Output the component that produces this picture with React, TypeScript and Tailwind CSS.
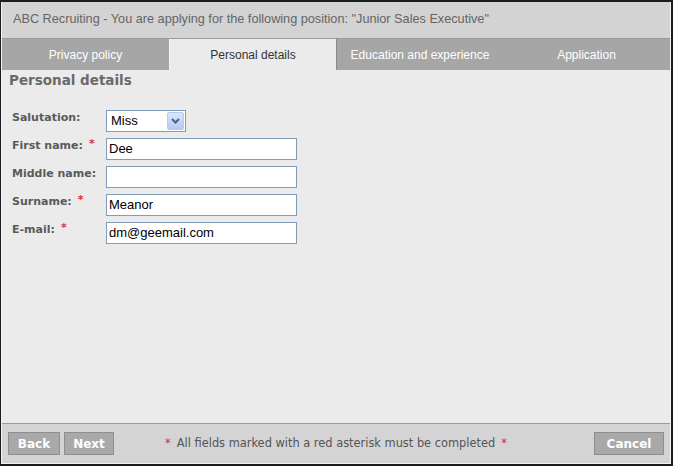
import React from "react";

const verdana = { fontFamily: '"DejaVu Sans", Verdana, sans-serif' };
const arial = { fontFamily: '"Liberation Sans", Arial, sans-serif' };

function Field({ value, width = "w-[191px]" }: { value: string; width?: string }) {
  return (
    <div
      className={`${width} h-[22px] bg-white border border-[#7f9db9] px-[2px] flex items-center text-[13px] text-black`}
      style={arial}
    >
      {value}
    </div>
  );
}

function Row({ label, required, children }: { label: string; required?: boolean; children: React.ReactNode }) {
  return (
    <div className="flex items-start h-[28px]">
      <div
        className="w-[94px] text-[11px] leading-[14px] font-bold text-[#5a5a5a] mt-[1px]"
        style={verdana}
      >
        {label}
        {required && <span className="text-[#e0302a] ml-[6px] relative -top-[2px]">*</span>}
      </div>
      {children}
    </div>
  );
}

function Select() {
  return (
    <div className="w-[80px] h-[22px] bg-white border border-[#7f9db9] flex items-center pl-[4px] pr-[1px] text-[13px] text-black" style={arial}>
      <span className="flex-1">Miss</span>
      <div className="w-[17px] h-[18px] rounded-[2px] border border-[#b8c9ef] bg-gradient-to-b from-[#dce6fb] to-[#b5c9f3] flex items-center justify-center">
        <svg width="9" height="6" viewBox="0 0 9 6">
          <path d="M1 1 L4.5 4.5 L8 1" stroke="#4d6185" strokeWidth="2" fill="none" />
        </svg>
      </div>
    </div>
  );
}

function Btn({ children, w }: { children: React.ReactNode; w: string }) {
  return (
    <div
      className={`${w} h-[23px] bg-[#a9a9a9] border border-[#8e8e8e] text-white font-bold text-[12px] flex items-center justify-center`}
      style={verdana}
    >
      {children}
    </div>
  );
}

export default function App() {
  const tabs = ["Privacy policy", "Personal details", "Education and experience", "Application"];
  return (
    <div className="w-[673px] h-[466px] border-t-2 border-l border-r-2 border-b-2 border-[#1c1c1c] bg-[#ebebeb] flex flex-col">
      <div className="flex-1 flex flex-col border-r border-b border-l border-[#f4f4f4]">
        <div className="h-[37px] bg-[#d3d3d3] border-b border-[#9a9a9a] flex items-center pl-[11px] text-[12.7px] text-[#656565]" style={arial}>
          ABC Recruiting - You are applying for the following position: "Junior Sales Executive"
        </div>
        <div className="h-[31px] bg-[#a6a6a6] flex" style={arial}>
          {tabs.map((t, i) =>
            i === 1 ? (
              <div key={t} className="w-[167px] bg-[#ebebeb] border-l border-[#f4f4f4] flex items-center justify-center text-[12px] text-[#333]">
                {t}
              </div>
            ) : (
              <div key={t} className={`w-[167px] flex items-center justify-center text-[12px] text-white ${i === 2 ? "border-l border-[#8a8a8a]" : ""}`}>
                {t}
              </div>
            )
          )}
        </div>
        <div className="flex-1 pl-[7px] pt-[2px]">
          <div className="text-[13.5px] font-bold text-[#6a6a6a] leading-[16px]" style={verdana}>
            Personal details
          </div>
          <div className="mt-[22px] pl-[3px] flex flex-col">
            <Row label="Salutation:">
              <Select />
            </Row>
            <Row label="First name:" required>
              <Field value="Dee" />
            </Row>
            <Row label="Middle name:">
              <Field value="" />
            </Row>
            <Row label="Surname:" required>
              <Field value="Meanor" />
            </Row>
            <Row label="E-mail:" required>
              <Field value="dm@geemail.com" />
            </Row>
          </div>
        </div>
        <div className="h-[40px] bg-[#d4d4d4] border-t border-[#9a9a9a] grid grid-cols-[1fr_auto_1fr] items-center px-[6px]">
          <div className="flex gap-[4px]">
            <Btn w="w-[52px]">Back</Btn>
            <Btn w="w-[50px]">Next</Btn>
          </div>
          <div className="flex text-[11.4px] text-[#555]" style={verdana}>
            <span className="text-[#e0302a] mr-[6px]">*</span>
            All fields marked with a red asterisk must be completed
            <span className="text-[#e0302a] ml-[6px]">*</span>
          </div>
          <div className="flex justify-end">
            <Btn w="w-[70px]">Cancel</Btn>
          </div>
        </div>
      </div>
    </div>
  );
}
